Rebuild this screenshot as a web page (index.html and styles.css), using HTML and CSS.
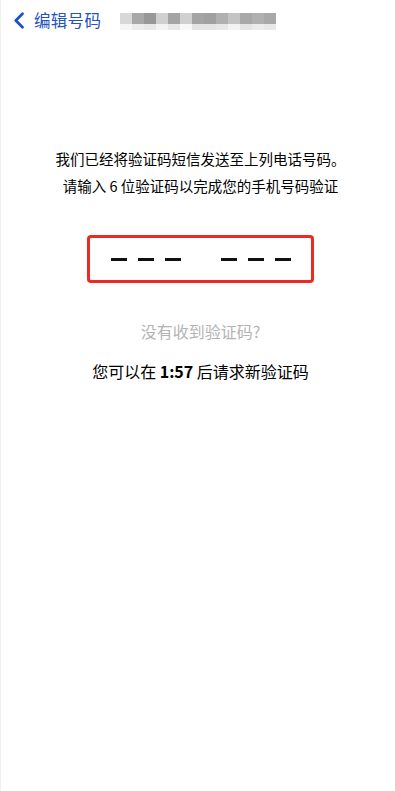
FILE: index.html
```html
<!DOCTYPE html>
<html lang="zh-CN">
<head>
<meta charset="utf-8">
<title>验证码</title>
<link rel="stylesheet" href="styles.css">
</head>
<body>
<div class="page">
  <header class="nav">
    <a class="back">
      <svg class="chev" width="12" height="17" viewBox="0 0 12 17"><path d="M9.5 1.8 L2.8 8.5 L9.5 15.2" fill="none" stroke="#1c4fd0" stroke-width="2.7" stroke-linecap="round" stroke-linejoin="round"/></svg>
      <span class="back-label">编辑号码</span>
    </a>
    <div class="mosaic">
      <div class="mrow top">
        <i style="background:#d8d8d8"></i><i style="background:#a8a8a8"></i><i style="background:#989898"></i><i style="background:#d0d0d0"></i><i style="background:#a4a4a4"></i><i style="background:#d0d0d0"></i><i style="background:#a4a4a4"></i><i style="background:#a0a0a0"></i><i style="background:#b0b0b0"></i><i style="background:#c4c4c4"></i><i style="background:#a8a8a8"></i><i style="background:#b0b0b0"></i><i style="background:#a8a8a8"></i>
      </div>
      <div class="mrow bottom">
        <i style="background:#f6f6f6"></i><i style="background:#ececec"></i><i style="background:#e8e8e8"></i><i style="background:#f4f4f4"></i><i style="background:#e8e8e8"></i><i style="background:#f8f8f8"></i><i style="background:#e4e4e4"></i><i style="background:#e4e4e4"></i><i style="background:#e8e8e8"></i><i style="background:#f4f4f4"></i><i style="background:#e4e4e4"></i><i style="background:#ececec"></i><i style="background:#e8e8e8"></i>
      </div>
    </div>
  </header>
  <main class="content">
    <p class="info">我们已经将验证码短信发送至上列电话号码。</p>
    <p class="info second">请输入 6 位验证码以完成您的手机号码验证</p>
    <div class="code-box">
      <div class="group"><span class="dash"></span><span class="dash"></span><span class="dash"></span></div>
      <div class="group"><span class="dash"></span><span class="dash"></span><span class="dash"></span></div>
    </div>
    <p class="resend">没有收到验证码?</p>
    <p class="timer">您可以在 <b>1:57</b> 后请求新验证码</p>
  </main>
</div>
</body>
</html>
```
FILE: styles.css
```css
html, body {
  margin: 0;
  padding: 0;
  background: #ffffff;
}
body {
  font-family: "Noto Sans CJK SC", "Noto Sans", sans-serif;
  color: #000000;
}
.page {
  width: 395px;
  height: 791px;
  box-sizing: border-box;
  border-left: 1px solid #f1f1f1;
}
.nav {
  height: 40px;
  display: flex;
  align-items: center;
  padding-left: 12px;
}
.back {
  display: flex;
  align-items: center;
  gap: 9px;
  color: #2451c4;
}
.chev {
  display: block;
}
.back-label {
  font-size: 16.5px;
  line-height: 20px;
  letter-spacing: 0.3px;
}
.mosaic {
  margin-left: 19px;
  margin-top: 2px;
  display: flex;
  flex-direction: column;
}
.mrow {
  display: flex;
}
.mrow i {
  display: block;
  width: 12px;
}
.mrow.top i { height: 11px; }
.mrow.bottom i { height: 6px; }
.content {
  padding-left: 5px;
  padding-top: 109px;
  display: flex;
  flex-direction: column;
  align-items: center;
}
.info {
  margin: 0;
  font-size: 14.5px;
  line-height: 20px;
  color: #000;
}
.info.second {
  margin-top: 7px;
}
.code-box {
  margin-top: 39px;
  width: 227px;
  height: 48px;
  box-sizing: border-box;
  border: 3px solid #ec2a22;
  border-radius: 4px;
  display: flex;
  align-items: center;
  justify-content: center;
  gap: 40px;
}
.group {
  display: flex;
  gap: 11px;
}
.dash {
  display: block;
  width: 16px;
  height: 3px;
  background: #111;
}
.resend {
  margin: 38px 0 0;
  font-size: 16px;
  line-height: 20px;
  color: #b3b3b3;
}
.timer {
  margin: 19px 0 0;
  font-size: 16px;
  line-height: 22px;
  color: #000;
}
.timer b {
  font-weight: 700;
}
```
